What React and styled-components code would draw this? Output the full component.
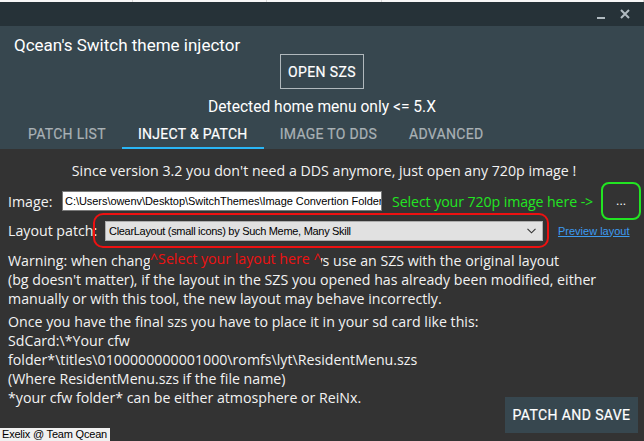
import React from "react";
import styled, { createGlobalStyle } from "styled-components";

const Global = createGlobalStyle`
  html, body { margin: 0; padding: 0; background: #333333; }
  body { font-family: "Open Sans", "Noto Sans", sans-serif; }
`;

const Window = styled.div`
  width: 644px;
  height: 441px;
  display: flex;
  flex-direction: column;
  background: #333333;
  overflow: hidden;
  position: relative;
`;

const DesktopStrip = styled.div`
  height: 2px;
  background: #f7f7f7;
  display: grid;
  grid-template-columns: 133px 134px 115px 1fr;
  div { border-right: 1px solid #d8d8d8; }
`;

const TitleBar = styled.div`
  height: 24px;
  background: #263238;
  display: flex;
  justify-content: flex-end;
  align-items: center;
  gap: 14px;
  padding-right: 14px;
`;

const Header = styled.div`
  background: #37474f;
  padding-top: 9px;
  display: flex;
  flex-direction: column;
  font-family: Roboto, "Liberation Sans", sans-serif;
  color: #ffffff;
`;

const AppTitle = styled.div`
  font-size: 17px;
  line-height: 20px;
  padding-left: 14px;
`;

const OutlineButton = styled.div`
  align-self: center;
  width: 82px;
  height: 33px;
  margin-top: -1px;
  border: 1px solid #b0b8bc;
  display: flex;
  align-items: center;
  justify-content: center;
  font-size: 14px;
  letter-spacing: 0.4px;
  -webkit-text-stroke: 0.2px currentColor;
`;

const Detected = styled.div`
  text-align: center;
  font-size: 15.6px;
  line-height: 20px;
  margin-top: 8px;
`;

const Tabs = styled.div`
  display: flex;
  padding-left: 12px;
  margin-top: 2px;
`;

const Tab = styled.div`
  height: 30px;
  padding: 0 16px;
  display: flex;
  align-items: center;
  font-size: 14px;
  letter-spacing: 0.3px;
  -webkit-text-stroke: 0.2px currentColor;
  color: ${(p) => (p.$active ? "#ffffff" : "#a9b1b5")};
  box-shadow: ${(p) => (p.$active ? "inset 0 -2px 0 #29b6f6" : "none")};
`;

const Body = styled.div`
  flex: 1;
  display: flex;
  flex-direction: column;
  padding: 12px 8px 0 8px;
  color: #f2f2f2;
  font-size: 14.2px;
  position: relative;
  white-space: nowrap;
`;

const Notice = styled.div`
  text-align: center;
  line-height: 20px;
  padding-left: 4px;
`;

const Row = styled.div`
  display: flex;
  align-items: center;
  margin-top: ${(p) => p.$top || 0}px;
`;

const Label = styled.span`
  width: ${(p) => p.$w}px;
  flex: none;
`;

const PathBox = styled.div`
  width: 316px;
  height: 18px;
  flex: none;
  background: #ffffff;
  border: 1px solid #7a7a7a;
  color: #000;
  font-family: "Liberation Sans", sans-serif;
  font-size: 11px;
  letter-spacing: -0.05px;
  line-height: 18px;
  padding-left: 2px;
  overflow: hidden;
`;

const Hint = styled.span`
  color: ${(p) => p.$color};
  margin-left: ${(p) => p.$ml || 0}px;
  letter-spacing: -0.1px;
`;

const BrowseButton = styled.div`
  width: 36px;
  height: 34px;
  flex: none;
  margin: -9px 0 -9px 8px;
  border: 2px solid #22e522;
  border-radius: 8px;
  display: flex;
  align-items: center;
  justify-content: center;
  color: #ffffff;
  font-family: "Liberation Sans", sans-serif;
  font-size: 12px;
`;

const Highlight = styled.div`
  width: 442px;
  height: 31px;
  flex: none;
  border: 2px solid #ee1111;
  border-radius: 10px;
  display: flex;
  align-items: center;
  padding-left: 10px;
`;

const Select = styled.div`
  width: 438px;
  height: 20px;
  background: #e1e1e1;
  border: 1px solid #adadad;
  display: flex;
  align-items: center;
  justify-content: space-between;
  padding: 0 6px 0 3px;
  box-sizing: border-box;
  color: #000;
  font-family: "Liberation Sans", sans-serif;
  font-size: 11px;
  letter-spacing: -0.3px;
`;

const LinkText = styled.span`
  color: #3d9bf0;
  text-decoration: underline;
  font-family: "Liberation Sans", sans-serif;
  font-size: 11px;
  margin-left: 9px;
`;

const Paragraph = styled.p`
  margin: ${(p) => p.$top || 0}px 0 0 0;
  line-height: 19px;
  position: relative;
`;

const Callout = styled.span`
  position: absolute;
  left: 142px;
  top: -3px;
  width: 171px;
  height: 25px;
  background: #333333;
  color: #ee1111;
  padding-top: 1px;
`;

const SaveButton = styled.div`
  position: absolute;
  right: 6px;
  bottom: 8px;
  width: 133px;
  height: 36px;
  background: #37474f;
  display: flex;
  align-items: center;
  justify-content: center;
  color: #ffffff;
  font-family: Roboto, "Liberation Sans", sans-serif;
  font-size: 14px;
  letter-spacing: 0.4px;
  -webkit-text-stroke: 0.2px currentColor;
`;

const Credit = styled.div`
  position: absolute;
  left: 0;
  bottom: 0;
  height: 13px;
  padding: 0 3px 0 2px;
  background: #f0f0f0;
  color: #000;
  font-family: "Liberation Sans", sans-serif;
  font-size: 11px;
  letter-spacing: -0.2px;
  line-height: 13px;
`;

const Minimize = () => (
  <svg width="9" height="9" viewBox="0 0 9 9">
    <rect x="0" y="7" width="8" height="2" fill="#b0bac0" />
  </svg>
);

const Close = () => (
  <svg width="10" height="10" viewBox="0 0 10 10">
    <path d="M1 1 L9 9 M9 1 L1 9" stroke="#b0bac0" strokeWidth="2" />
  </svg>
);

const Chevron = () => (
  <svg width="9" height="6" viewBox="0 0 9 6">
    <path d="M0.5 0.8 L4.5 4.8 L8.5 0.8" stroke="#333" strokeWidth="1.1" fill="none" />
  </svg>
);

export default function App() {
  return (
    <Window>
      <Global />
      <DesktopStrip>
        <div />
        <div />
        <div />
        <div />
      </DesktopStrip>
      <TitleBar>
        <Minimize />
        <Close />
      </TitleBar>
      <Header>
        <AppTitle>Qcean's Switch theme injector</AppTitle>
        <OutlineButton>OPEN SZS</OutlineButton>
        <Detected>Detected home menu only &lt;= 5.X</Detected>
        <Tabs>
          <Tab>PATCH LIST</Tab>
          <Tab $active>INJECT &amp; PATCH</Tab>
          <Tab>IMAGE TO DDS</Tab>
          <Tab>ADVANCED</Tab>
        </Tabs>
      </Header>
      <Body>
        <Notice>
          Since version 3.2 you don't need a DDS anymore, just open any 720p image !
        </Notice>
        <Row $top={10}>
          <Label $w={54}>Image:</Label>
          <PathBox>C:\Users\owenv\Desktop\SwitchThemes\Image Convertion Folder</PathBox>
          <Hint $color="#22e522" $ml={10}>Select your 720p image here -&gt;</Hint>
          <BrowseButton>...</BrowseButton>
        </Row>
        <Row $top={2}>
          <Label $w={85}>Layout patch:</Label>
          <Highlight>
            <Select>
              <span>ClearLayout (small icons) by Such Meme, Many Skill</span>
              <Chevron />
            </Select>
          </Highlight>
          <LinkText>Preview layout</LinkText>
        </Row>
        <Paragraph $top={3}>
          Warning: when changing the layout patch always use an SZS with the original layout
          <br />
          (bg doesn't matter), if the layout in the SZS you opened has already been modified, either
          <br />
          manually or with this tool, the new layout may behave incorrectly.
          <Callout>^Select your layout here ^</Callout>
        </Paragraph>
        <Paragraph $top={4}>
          Once you have the final szs you have to place it in your sd card like this:
          <br />
          SdCard:\*Your cfw
          <br />
          folder*\titles\0100000000001000\romfs\lyt\ResidentMenu.szs
          <br />
          (Where ResidentMenu.szs if the file name)
          <br />
          *your cfw folder* can be either atmosphere or ReiNx.
        </Paragraph>
        <SaveButton>PATCH AND SAVE</SaveButton>
        <Credit>Exelix @ Team Qcean</Credit>
      </Body>
    </Window>
  );
}
